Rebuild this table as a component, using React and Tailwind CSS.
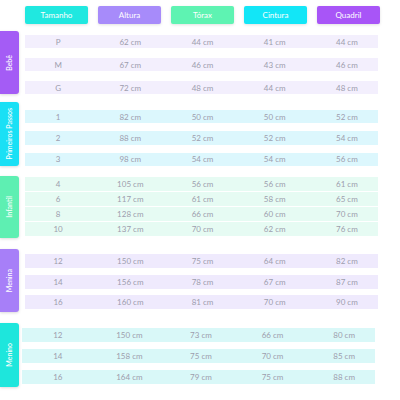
const headers = [
  { label: "Tamanho", bg: "bg-[#20e8e0]" },
  { label: "Altura", bg: "bg-[#a78bfa]" },
  { label: "Tórax", bg: "bg-[#5ef3b2]" },
  { label: "Cintura", bg: "bg-[#12e6f7]" },
  { label: "Quadril", bg: "bg-[#a855f7]" },
];

const sections = [
  {
    name: "Bebê",
    label: "bg-[#a45cf5]",
    row: "bg-[#f3effd] pl-[2px]",
    box: "mt-[7px] h-[63px]",
    rows: "ml-[6px] pt-[4px] gap-[10px]",
    rowH: "h-[13px]",
    data: [
      ["P", 62, 44, 41, 44],
      ["M", 67, 46, 43, 46],
      ["G", 72, 48, 44, 48],
    ],
  },
  {
    name: "Primeiros Passos",
    label: "bg-[#1ae0f5]",
    row: "bg-[#dcf7fd] pl-[2px]",
    box: "mt-[8px] h-[64px]",
    rows: "ml-[6px] pt-[8px] gap-[8px]",
    rowH: "h-[14px]",
    data: [
      ["1", 82, 50, 50, 52],
      ["2", 88, 52, 52, 54],
      ["3", 98, 54, 54, 56],
    ],
  },
  {
    name: "Infantil",
    label: "bg-[#5eefb2]",
    row: "bg-[#e6fbf3] pl-[2px]",
    box: "mt-[10px] h-[62px]",
    rows: "ml-[6px] pt-[1px] gap-[1px]",
    rowH: "h-[14px]",
    data: [
      ["4", 105, 56, 56, 61],
      ["6", 117, 61, 58, 65],
      ["8", 128, 66, 60, 70],
      ["10", 137, 70, 62, 76],
    ],
  },
  {
    name: "Menina",
    label: "bg-[#a77ff8]",
    row: "bg-[#efeafd] pl-[2px]",
    box: "mt-[11px] h-[63px]",
    rows: "ml-[6px] pt-[5px] gap-[6.5px]",
    rowH: "h-[14px]",
    data: [
      ["12", 150, 75, 64, 82],
      ["14", 156, 78, 67, 87],
      ["16", 160, 81, 70, 90],
    ],
  },
  {
    name: "Menino",
    label: "bg-[#1ee6dc]",
    row: "bg-[#d9f8f8] pl-[5px]",
    box: "mt-[11px] h-[64px]",
    rows: "ml-[3px] pt-[5px] gap-[7px]",
    rowH: "h-[14px]",
    data: [
      ["12", 150, 73, 66, 80],
      ["14", 158, 75, 70, 85],
      ["16", 164, 79, 75, 88],
    ],
  },
];

function Row({ values, bg, height }) {
  return (
    <div className={`flex items-center gap-[10px] ${bg} ${height}`}>
      {values.map((v, i) => (
        <div key={i} className="w-[63px] text-center text-[8px] leading-none text-[#9d9dad]">
          {i === 0 ? v : `${v} cm`}
        </div>
      ))}
    </div>
  );
}

export default function App() {
  return (
    <div
      className="w-[400px] h-[400px] bg-white pt-[6px] overflow-hidden"
      style={{ fontFamily: "Lato, 'Noto Sans', sans-serif" }}
    >
      <div className="flex gap-[10px] pl-[25px]">
        {headers.map((h) => (
          <div
            key={h.label}
            className={`w-[63px] h-[18px] rounded-[2px] flex items-center justify-center text-[8px] text-white shadow-[0_1px_3px_rgba(0,0,0,0.12)] ${h.bg}`}
          >
            {h.label}
          </div>
        ))}
      </div>

      {sections.map((s) => (
        <div key={s.name} className={`flex ${s.box}`}>
          <div
            className={`w-[19px] h-full rounded-r-[3px] flex items-center justify-center shadow-[0_1px_3px_rgba(0,0,0,0.15)] ${s.label}`}
          >
            <span className="[writing-mode:vertical-rl] rotate-180 text-[7px] font-medium text-white whitespace-nowrap">
              {s.name}
            </span>
          </div>
          <div className={`w-[353px] flex flex-col ${s.rows}`}>
            {s.data.map((r) => (
              <Row key={r[0]} values={r} bg={s.row} height={s.rowH} />
            ))}
          </div>
        </div>
      ))}
    </div>
  );
}
